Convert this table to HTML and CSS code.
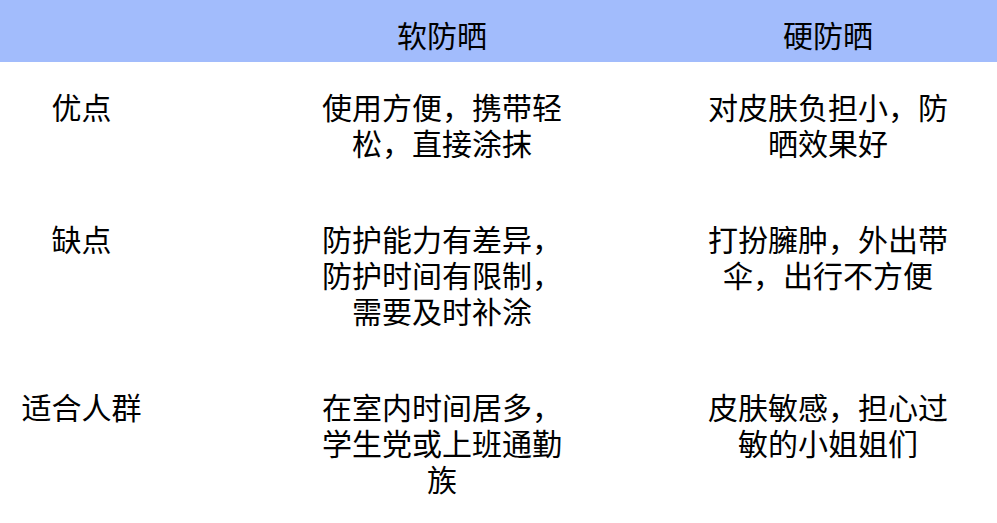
FILE: index.html
```html
<!DOCTYPE html>
<html lang="zh-CN">
<head>
<meta charset="utf-8">
<title>软防晒 vs 硬防晒</title>
<link rel="stylesheet" href="styles.css">
</head>
<body>
<div class="table">
  <div class="row head">
    <div class="cell c1"></div>
    <div class="cell c2"><div class="txt">软防晒</div></div>
    <div class="cell c3"><div class="txt">硬防晒</div></div>
  </div>
  <div class="body">
    <div class="row">
      <div class="cell c1"><div class="label">优点</div></div>
      <div class="cell c2"><div class="txt">使用方便，携带轻松，直接涂抹</div></div>
      <div class="cell c3"><div class="txt">对皮肤负担小，防晒效果好</div></div>
    </div>
    <div class="row">
      <div class="cell c1"><div class="label">缺点</div></div>
      <div class="cell c2"><div class="txt">防护能力有差异，防护时间有限制，需要及时补涂</div></div>
      <div class="cell c3"><div class="txt">打扮臃肿，外出带伞，出行不方便</div></div>
    </div>
    <div class="row">
      <div class="cell c1"><div class="label">适合人群</div></div>
      <div class="cell c2"><div class="txt">在室内时间居多，学生党或上班通勤族</div></div>
      <div class="cell c3"><div class="txt">皮肤敏感，担心过敏的小姐姐们</div></div>
    </div>
  </div>
</div>
</body>
</html>
```

FILE: styles.css
```css
* { box-sizing: border-box; }
html, body {
  margin: 0;
  padding: 0;
  background: #ffffff;
}
body {
  width: 997px;
  height: 523px;
  overflow: hidden;
  font-family: "Noto Sans CJK SC", "Noto Sans", sans-serif;
  font-size: 30px;
  line-height: 36px;
  color: #000000;
}
.row {
  display: grid;
  grid-template-columns: 163px 1fr 1fr;
}
.head {
  height: 62px;
  padding-top: 16px;
  background: #a2bcfc;
}
.body {
  display: flex;
  flex-direction: column;
  gap: 60px;
  padding-top: 26px;
}
.cell { text-align: center; }
.c2 { padding-left: 141px; }
.c3 { padding-left: 79px; }
.txt {
  width: 250px;
  margin: 0 auto;
  text-align: center;
}
.label { text-align: center; }
```
